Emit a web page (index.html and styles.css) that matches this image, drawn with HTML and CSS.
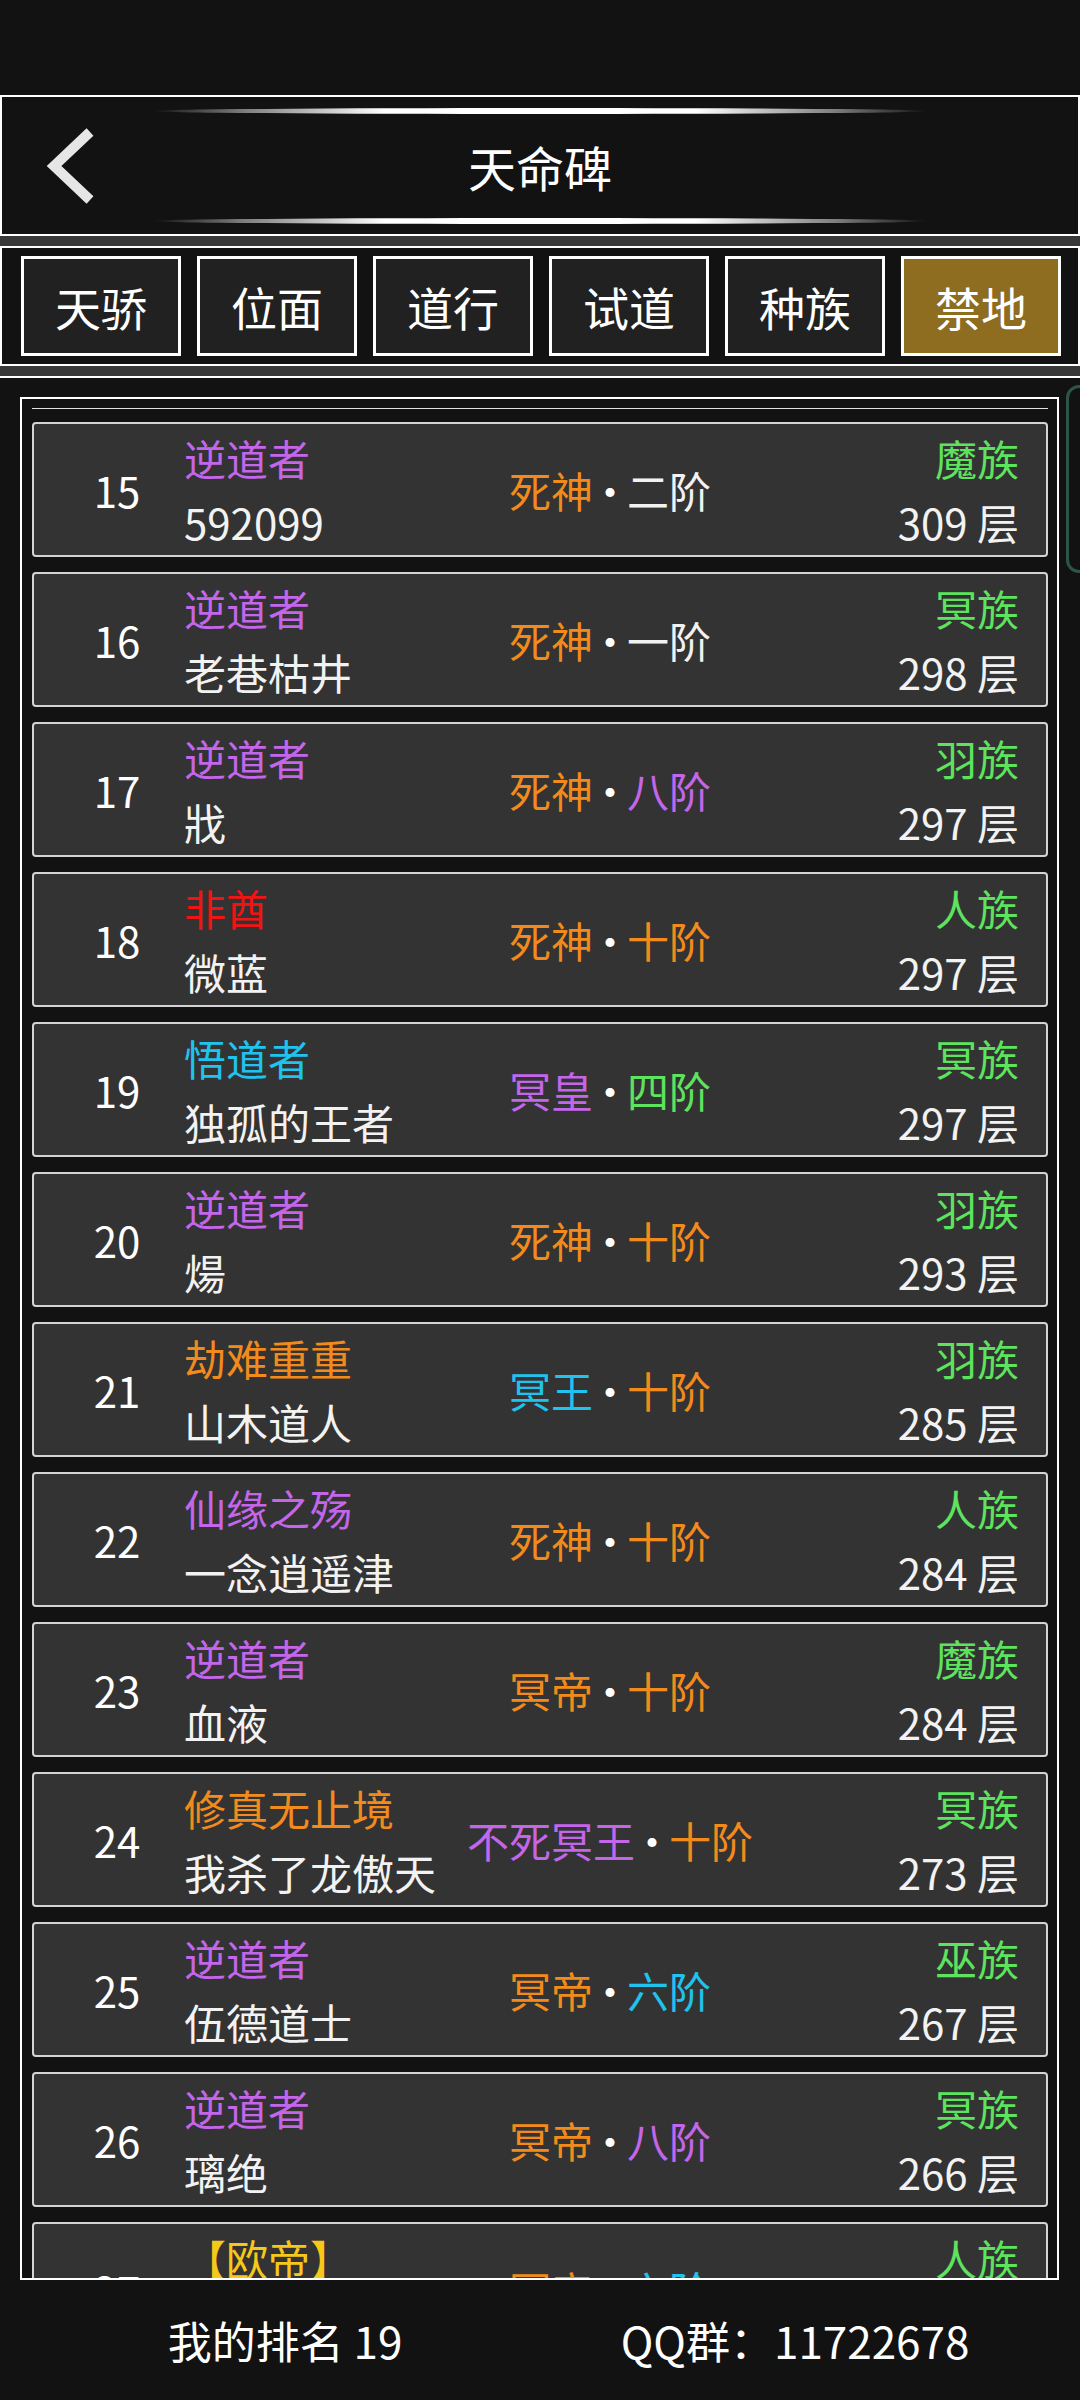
FILE: index.html
```html
<!DOCTYPE html>
<html lang="zh-CN">
<head>
  <meta charset="UTF-8">
  <meta name="viewport" content="width=device-width, initial-scale=1.0">
  <title>天命碑</title>
  <link rel="stylesheet" href="styles.css">
</head>
<body>

<!-- 状态栏 -->
<div class="status"></div>

<!-- 标题栏 -->
<div class="header">
  <svg class="back" width="60" height="90" viewBox="0 0 60 90">
    <polyline points="50,11 14,45 50,79" fill="none" stroke="#e6e6e6" stroke-width="10"/>
  </svg>
  <div class="deco deco-top"></div>
  <h1 class="title">天命碑</h1>
  <div class="deco deco-bottom"></div>
</div>

<div class="band"></div>

<!-- 分类标签 -->
<div class="tabs">
  <div class="tab">天骄</div>
  <div class="tab">位面</div>
  <div class="tab">道行</div>
  <div class="tab">试道</div>
  <div class="tab">种族</div>
  <div class="tab active">禁地</div>
</div>

<div class="band"></div>

<!-- 排行列表 -->
<div class="board">
  <div class="thumb"></div>
  <div class="frame">
    <div class="divider"></div>

    <div class="row">
      <div class="rank">15</div>
      <div class="who"><span class="purple">逆道者</span><span>592099</span></div>
      <div class="level"><span class="orange">死神</span><span class="dot">·</span><span>二阶</span></div>
      <div class="race"><span class="green">魔族</span><span>309 层</span></div>
    </div>

    <div class="row">
      <div class="rank">16</div>
      <div class="who"><span class="purple">逆道者</span><span>老巷枯井</span></div>
      <div class="level"><span class="orange">死神</span><span class="dot">·</span><span>一阶</span></div>
      <div class="race"><span class="green">冥族</span><span>298 层</span></div>
    </div>

    <div class="row">
      <div class="rank">17</div>
      <div class="who"><span class="purple">逆道者</span><span>戕</span></div>
      <div class="level"><span class="orange">死神</span><span class="dot">·</span><span class="purple">八阶</span></div>
      <div class="race"><span class="green">羽族</span><span>297 层</span></div>
    </div>

    <div class="row">
      <div class="rank">18</div>
      <div class="who"><span class="red">非酋</span><span>微蓝</span></div>
      <div class="level"><span class="orange">死神</span><span class="dot">·</span><span class="orange">十阶</span></div>
      <div class="race"><span class="green">人族</span><span>297 层</span></div>
    </div>

    <div class="row">
      <div class="rank">19</div>
      <div class="who"><span class="cyan">悟道者</span><span>独孤的王者</span></div>
      <div class="level"><span class="purple">冥皇</span><span class="dot">·</span><span class="green">四阶</span></div>
      <div class="race"><span class="green">冥族</span><span>297 层</span></div>
    </div>

    <div class="row">
      <div class="rank">20</div>
      <div class="who"><span class="purple">逆道者</span><span>煬</span></div>
      <div class="level"><span class="orange">死神</span><span class="dot">·</span><span class="orange">十阶</span></div>
      <div class="race"><span class="green">羽族</span><span>293 层</span></div>
    </div>

    <div class="row">
      <div class="rank">21</div>
      <div class="who"><span class="orange">劫难重重</span><span>山木道人</span></div>
      <div class="level"><span class="cyan">冥王</span><span class="dot">·</span><span class="orange">十阶</span></div>
      <div class="race"><span class="green">羽族</span><span>285 层</span></div>
    </div>

    <div class="row">
      <div class="rank">22</div>
      <div class="who"><span class="purple">仙缘之殇</span><span>一念逍遥津</span></div>
      <div class="level"><span class="orange">死神</span><span class="dot">·</span><span class="orange">十阶</span></div>
      <div class="race"><span class="green">人族</span><span>284 层</span></div>
    </div>

    <div class="row">
      <div class="rank">23</div>
      <div class="who"><span class="purple">逆道者</span><span>血液</span></div>
      <div class="level"><span class="orange">冥帝</span><span class="dot">·</span><span class="orange">十阶</span></div>
      <div class="race"><span class="green">魔族</span><span>284 层</span></div>
    </div>

    <div class="row">
      <div class="rank">24</div>
      <div class="who"><span class="orange">修真无止境</span><span>我杀了龙傲天</span></div>
      <div class="level"><span class="purple">不死冥王</span><span class="dot">·</span><span class="orange">十阶</span></div>
      <div class="race"><span class="green">冥族</span><span>273 层</span></div>
    </div>

    <div class="row">
      <div class="rank">25</div>
      <div class="who"><span class="purple">逆道者</span><span>伍德道士</span></div>
      <div class="level"><span class="orange">冥帝</span><span class="dot">·</span><span class="cyan">六阶</span></div>
      <div class="race"><span class="green">巫族</span><span>267 层</span></div>
    </div>

    <div class="row">
      <div class="rank">26</div>
      <div class="who"><span class="purple">逆道者</span><span>璃绝</span></div>
      <div class="level"><span class="orange">冥帝</span><span class="dot">·</span><span class="purple">八阶</span></div>
      <div class="race"><span class="green">冥族</span><span>266 层</span></div>
    </div>

    <div class="row">
      <div class="rank">27</div>
      <div class="who"><span class="yellow">【欧帝】</span><span></span></div>
      <div class="level"><span class="orange">冥帝</span><span class="dot">·</span><span class="cyan">六阶</span></div>
      <div class="race"><span class="green">人族</span><span></span></div>
    </div>
  </div>
</div>

<!-- 底部信息 -->
<div class="footer">
  <div>我的排名 19</div>
  <div>QQ群：11722678</div>
</div>

</body>
</html>
```

FILE: styles.css
```css
body {
  margin: 0;
  width: 1080px;
  height: 2400px;
  overflow: hidden;
  background-color: #121212;
  color: #f2f2f2;
  font-family: "Noto Sans CJK SC", "Noto Sans", sans-serif;
}

.status {
  height: 95px;
  background-color: #121212;
}

/* 标题栏 */
.header {
  box-sizing: border-box;
  height: 141px;
  border: 2px solid #fff;
  background-color: #121212;
  display: grid;
  grid-template-columns: 150px 1fr 150px;
  grid-template-rows: 6px 1fr 6px;
  padding: 11px 0 10px;
}

.back {
  grid-column: 1;
  grid-row: 1 / 4;
  align-self: center;
  margin-left: 38px;
}

.deco {
  grid-column: 2;
  height: 6px;
  border-radius: 50%;
  background: linear-gradient(90deg, rgba(255,255,255,0) 0%, rgba(200,200,200,0.6) 12%, #fff 30%, #fff 70%, rgba(200,200,200,0.6) 88%, rgba(255,255,255,0) 100%);
}

.deco-top {
  grid-row: 1;
}

.deco-bottom {
  grid-row: 3;
}

.title {
  grid-column: 2;
  grid-row: 2;
  margin: 0;
  align-self: center;
  text-align: center;
  font-size: 48px;
  font-weight: normal;
  color: #fff;
  line-height: 1;
}

.band {
  height: 10px;
  background-color: #383838;
}

/* 标签 */
.tabs {
  box-sizing: border-box;
  height: 120px;
  border: 2px solid #fff;
  background-color: #121212;
  display: flex;
  gap: 16px;
  padding: 8px 17px 8px 19px;
}

.tab {
  box-sizing: border-box;
  width: 160px;
  height: 100px;
  border: 3px solid #fff;
  background-color: #212121;
  color: #fff;
  font-size: 46px;
  display: flex;
  align-items: center;
  justify-content: center;
}

.tab.active {
  background-color: #8e6c20;
}

/* 列表 */
.board {
  position: relative;
  border-top: 2px solid #fff;
  padding: 19px 0 0 20px;
  background-color: #121212;
}

.thumb {
  position: absolute;
  left: 1066px;
  top: 7px;
  width: 20px;
  height: 182px;
  border: 3px solid #2c5548;
  border-radius: 14px;
}

.frame {
  box-sizing: border-box;
  width: 1039px;
  height: 1883px;
  border: 2px solid #fff;
  overflow: hidden;
  padding: 9px 9px 0 10px;
  display: flex;
  flex-direction: column;
  gap: 15px;
}

.divider {
  flex: none;
  height: 1px;
  background-color: #e0e0e0;
  margin-bottom: -2px;
}

.row {
  flex: none;
  box-sizing: border-box;
  height: 135px;
  border: 2px solid #d4d4d4;
  border-radius: 4px;
  background-color: #333;
  display: grid;
  grid-template-columns: 134px 256px 1fr 239px;
  align-items: center;
  padding: 0 27px 0 16px;
  font-size: 42px;
  white-space: nowrap;
}

.rank {
  text-align: center;
  color: #fff;
}

.who,
.race {
  display: flex;
  flex-direction: column;
  line-height: 64px;
}

.who span,
.race span {
  height: 64px;
}

.race {
  align-items: flex-end;
}

.level {
  text-align: center;
}

.dot {
  color: #fff;
  margin: 0 -4px;
}

.purple { color: #c466ea; }
.orange { color: #f28b1c; }
.green { color: #5ee35e; }
.red { color: #f01414; }
.cyan { color: #1fc3ee; }
.yellow { color: #f6c81a; }

/* 底部 */
.footer {
  height: 120px;
  display: grid;
  grid-template-columns: 1fr 1fr;
  align-items: center;
  padding: 0 30px;
  font-size: 44px;
  color: #fff;
  text-align: center;
}
```
